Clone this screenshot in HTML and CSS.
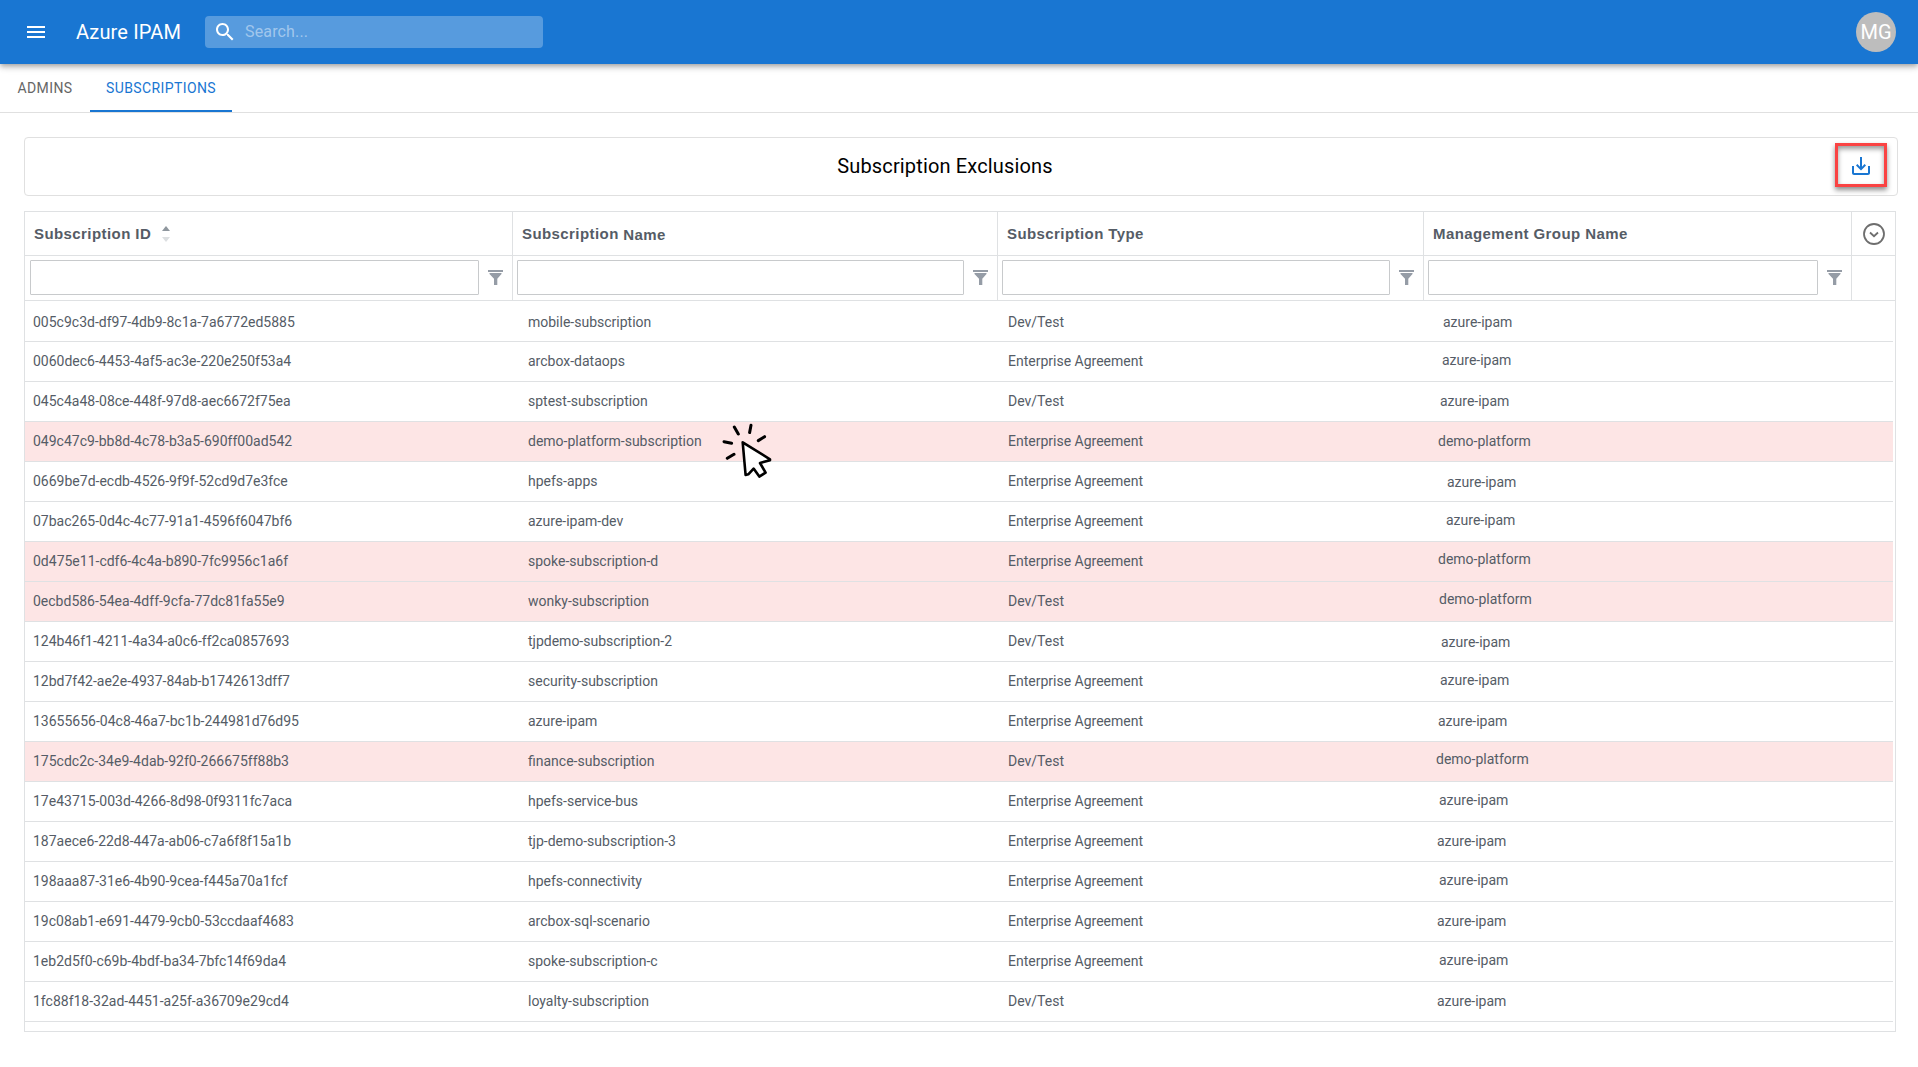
FILE: index.html
```html
<!DOCTYPE html>
<html lang="en">
<head>
<meta charset="utf-8">
<title>Azure IPAM</title>
<link rel="stylesheet" href="styles.css">
</head>
<body>
<svg class="defs" width="0" height="0" aria-hidden="true">
  <symbol id="funnel" viewBox="0 0 15 15"><path d="M0 0h15v2H0zM1.5 3h12v1L9.3 8.7V15H6V8.7L1.500 4z"/></symbol>
</svg>
<header class="appbar">
  <svg class="menu" viewBox="0 0 24 24"><path d="M3 18h18v-2H3v2zm0-5h18v-2H3v2zm0-7v2h18V6H3z"/></svg>
  <div class="brand">Azure IPAM</div>
  <div class="search">
    <svg viewBox="0 0 24 24"><path d="M15.500 14h-.79l-.28-.27C15.410 12.590 16 11.110 16 9.500 16 5.910 13.090 3 9.500 3S3 5.910 3 9.500 5.910 16 9.500 16c1.610 0 3.090-.59 4.230-1.570l.27.28v.79l5 4.990L20.490 19l-4.990-5zm-6 0C7.010 14 5 11.990 5 9.500S7.010 5 9.500 5 14 7.010 14 9.500 11.990 14 9.500 14z"/></svg>
    <span>Search...</span>
  </div>
  <div class="avatar">MG</div>
</header>
<nav class="tabs">
  <div class="tab">ADMINS</div>
  <div class="tab active">SUBSCRIPTIONS</div>
</nav>
<main>
  <section class="titlebar">
    <h1>Subscription Exclusions</h1>
    <div class="save"><svg viewBox="0 0 24 24"><path d="M19 12v7H5v-7H3v7c0 1.100.9 2 2 2h14c1.100 0 2-.9 2-2v-7h-2zm-6 .67l2.590-2.580L17 11.500l-5 5-5-5 1.410-1.410L11 12.670V3h2z"/></svg></div>
  </section>
  <section class="grid">
    <div class="cols heads">
      <div>Subscription ID<svg class="sort" viewBox="0 0 8 16"><path d="M0 5L4 0l4 5z" fill="#8f979e"/><path d="M0 11h8l-4 5z" fill="#dcdfe1"/></svg></div>
      <div><span>Subscription <span class="low">Name</span></span></div>
      <div>Subscription Type</div>
      <div>Management Group Name</div>
      <div class="more"><svg viewBox="0 0 22 22"><circle cx="11" cy="11" r="10"/><path d="M7 9.500l4 3.700 4-3.700"/></svg></div>
    </div>
    <div class="cols filters">
      <div><i></i><svg><use href="#funnel"/></svg></div>
      <div><i></i><svg><use href="#funnel"/></svg></div>
      <div><i></i><svg><use href="#funnel"/></svg></div>
      <div><i></i><svg><use href="#funnel"/></svg></div>
      <div></div>
    </div>
    <div class="rows">
      <div class="row"><span>005c9c3d-df97-4db9-8c1a-7a6772ed5885</span><span>mobile-subscription</span><span>Dev/Test</span><span class="in7">azure-ipam</span></div>
      <div class="row"><span>0060dec6-4453-4af5-ac3e-220e250f53a4</span><span>arcbox-dataops</span><span>Enterprise Agreement</span><span class="in6 up1">azure-ipam</span></div>
      <div class="row"><span>045c4a48-08ce-448f-97d8-aec6672f75ea</span><span>sptest-subscription</span><span>Dev/Test</span><span class="in4">azure-ipam</span></div>
      <div class="row excluded"><span>049c47c9-bb8d-4c78-b3a5-690ff00ad542</span><span>demo-platform-subscription</span><span>Enterprise Agreement</span><span class="in2">demo-platform</span></div>
      <div class="row"><span>0669be7d-ecdb-4526-9f9f-52cd9d7e3fce</span><span>hpefs-apps</span><span>Enterprise Agreement</span><span class="in11 down1">azure-ipam</span></div>
      <div class="row"><span>07bac265-0d4c-4c77-91a1-4596f6047bf6</span><span>azure-ipam-dev</span><span>Enterprise Agreement</span><span class="in10 up1">azure-ipam</span></div>
      <div class="row excluded"><span>0d475e11-cdf6-4c4a-b890-7fc9956c1a6f</span><span>spoke-subscription-d</span><span>Enterprise Agreement</span><span class="in2 up2">demo-platform</span></div>
      <div class="row excluded"><span>0ecbd586-54ea-4dff-9cfa-77dc81fa55e9</span><span>wonky-subscription</span><span>Dev/Test</span><span class="in3 up2">demo-platform</span></div>
      <div class="row"><span>124b46f1-4211-4a34-a0c6-ff2ca0857693</span><span>tjpdemo-subscription-2</span><span>Dev/Test</span><span class="in5 down1">azure-ipam</span></div>
      <div class="row"><span>12bd7f42-ae2e-4937-84ab-b1742613dff7</span><span>security-subscription</span><span>Enterprise Agreement</span><span class="in4 up1">azure-ipam</span></div>
      <div class="row"><span>13655656-04c8-46a7-bc1b-244981d76d95</span><span>azure-ipam</span><span>Enterprise Agreement</span><span class="in2">azure-ipam</span></div>
      <div class="row excluded"><span>175cdc2c-34e9-4dab-92f0-266675ff88b3</span><span>finance-subscription</span><span>Dev/Test</span><span class="in0 up2">demo-platform</span></div>
      <div class="row"><span>17e43715-003d-4266-8d98-0f9311fc7aca</span><span>hpefs-service-bus</span><span>Enterprise Agreement</span><span class="in3 up1">azure-ipam</span></div>
      <div class="row"><span>187aece6-22d8-447a-ab06-c7a6f8f15a1b</span><span>tjp-demo-subscription-3</span><span>Enterprise Agreement</span><span class="in1">azure-ipam</span></div>
      <div class="row"><span>198aaa87-31e6-4b90-9cea-f445a70a1fcf</span><span>hpefs-connectivity</span><span>Enterprise Agreement</span><span class="in3 up1">azure-ipam</span></div>
      <div class="row"><span>19c08ab1-e691-4479-9cb0-53ccdaaf4683</span><span>arcbox-sql-scenario</span><span>Enterprise Agreement</span><span class="in1">azure-ipam</span></div>
      <div class="row"><span>1eb2d5f0-c69b-4bdf-ba34-7bfc14f69da4</span><span>spoke-subscription-c</span><span>Enterprise Agreement</span><span class="in3 up1">azure-ipam</span></div>
      <div class="row"><span>1fc88f18-32ad-4451-a25f-a36709e29cd4</span><span>loyalty-subscription</span><span>Dev/Test</span><span class="in1">azure-ipam</span></div>
    </div>
  </section>
</main>
<svg class="pointer" viewBox="0 0 50 56">
  <g fill="none" stroke="#000" stroke-width="3" stroke-linecap="round"><path d="M12.300 5l4 7M29 3.300l-1.400 7.300M36.300 18.600l6.300-3.900M2 19.700l7.600 1.600M5.300 36.300l6.700-4"/></g>
  <path d="M20.700 20.300L23.600 53l2.700-.7 5.300-5.700 5.700 8 6.300-4L38 41l10-2.700v-1z" fill="#fff" stroke="#000" stroke-width="2.600" stroke-linejoin="round"/>
</svg>
</body>
</html>
```
FILE: styles.css
```css
* { box-sizing: border-box; }
body { margin: 0; background: #fff; font-family: Roboto, sans-serif; height: 1067px; overflow: hidden; }
svg { display: block; flex: none; }
.defs { position: absolute; }
.appbar { display: flex; align-items: center; height: 64px; padding: 0 22px 0 24px; background: #1976d2; color: #fff; position: relative;
  box-shadow: 0 2px 4px -1px rgba(0,0,0,.2), 0 4px 5px rgba(0,0,0,.14), 0 1px 10px rgba(0,0,0,.12); }
.menu { width: 24px; height: 24px; fill: #fff; }
.brand { width: 129px; margin-left: 28px; font-size: 20px; letter-spacing: .15px; white-space: nowrap; }
.search { display: flex; align-items: center; width: 338px; height: 32px; padding-left: 8px; border-radius: 4px; background: rgba(255,255,255,.27); font-size: 16px; letter-spacing: .15px; }
.search svg { width: 24px; height: 24px; fill: #fff; }
.search span { margin: 0 0 2px 8px; color: rgba(255,255,255,.45); }
.avatar { display: grid; place-items: center; width: 40px; height: 40px; margin-left: auto; border-radius: 50%; background: #bdbdbd; font-size: 20px; }
.tabs { display: flex; height: 49px; border-bottom: 1px solid #e0e0e0; font-size: 14px; letter-spacing: .4px; color: #666; }
.tab { display: grid; place-items: center; width: 90px; height: 48px; }
.tab.active { width: 142px; color: #1976d2; border-bottom: 2px solid #1976d2; padding-top: 2px; }
main { padding: 24px 20px 0 24px; }
.titlebar { display: grid; grid-template-columns: 62px 1fr 62px; align-items: center; height: 59px; border: 1px solid #e0e0e0; border-radius: 4px; }
h1 { grid-column: 2; margin: 0 32px 2px 0; font-size: 20px; font-weight: 400; letter-spacing: .15px; text-align: center; }
.save { display: grid; place-items: center; width: 52px; height: 44px; border: 3px solid #fa4343; margin-top: -3px; box-shadow: 0 3px 5px rgba(0,0,0,.45), inset 0 3px 5px rgba(0,0,0,.4); }
.save svg { width: 24px; height: 24px; fill: #1976d2; margin-top: 2px; }
.grid { width: 1872px; height: 821px; margin-top: 15px; border: 1px solid #dfe1e3; }
.cols { display: grid; grid-template-columns: 488px 485px 426px 428px 43px; border-bottom: 1px solid #dfe1e3; }
.cols > div { display: flex; align-items: center; border-right: 1px solid #dfe1e3; }
.cols > div:last-child { border-right: 0; }
.heads { height: 44px; color: #555c66; font: bold 15px "Liberation Sans", Arial, sans-serif; letter-spacing: .42px; }
.heads > div { padding-left: 9px; }
.low { display: inline-block; transform: translateY(1px); }
.sort { width: 8px; height: 16px; margin-left: 11px; }
.heads .more { padding-left: 11px; }
.more svg { width: 22px; height: 22px; fill: none; stroke: #6e6e6e; stroke-width: 1.8; }
.filters { height: 45px; }
.filters > div { padding: 0 9px 2px 5px; }
.filters > div:nth-child(n+2) { padding-left: 4px; }
.filters i { flex: 1; height: 35px; border: 1px solid #c8cacc; margin-right: 9px; border-radius: 1px; }
.filters svg { width: 15px; height: 15px; fill: #959ca6; }
.rows { width: 1868px; }
.row { display: grid; grid-template-columns: 495px 480px 428px 1fr; align-items: center; height: 40px; padding: 0 0 1px 8px; border-bottom: 1px solid #dfe1e3; color: #555c66; font-size: 14px; line-height: 20px; }
.row:first-child { height: 41px; padding: 2px 0 0 8px; }
.excluded { background: #fde5e5; }
.in1 { padding-left: 1px; } .in2 { padding-left: 2px; } .in3 { padding-left: 3px; } .in4 { padding-left: 4px; }
.in5 { padding-left: 5px; } .in6 { padding-left: 6px; } .in7 { padding-left: 7px; } .in10 { padding-left: 10px; } .in11 { padding-left: 11px; }
.up1 { transform: translateY(-1px); } .up2 { transform: translateY(-2px); } .down1 { transform: translateY(1px); }
.pointer { position: absolute; left: 722px; top: 422px; width: 50px; height: 56px; }
```
